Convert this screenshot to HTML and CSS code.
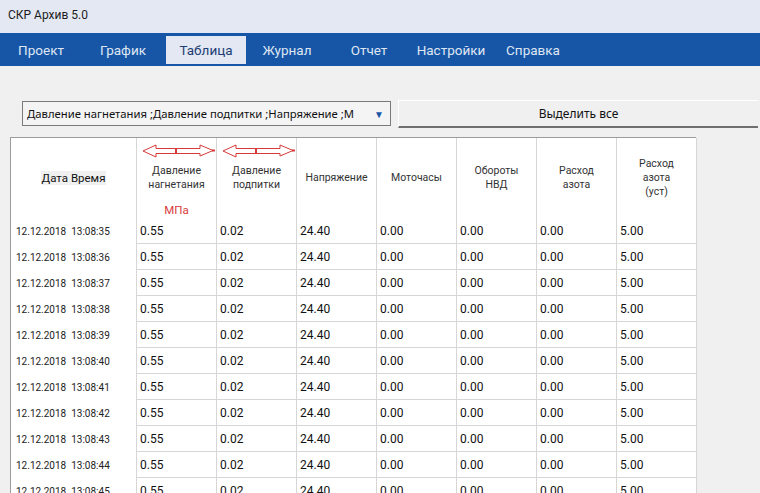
FILE: index.html
```html
<!DOCTYPE html>
<html lang="ru">
<head>
<meta charset="utf-8">
<link rel="stylesheet" href="styles.css">
</head>
<body>
<div class="titlebar">СКР Архив 5.0</div>
<nav class="nav">
  <div class="nav-item">Проект</div>
  <div class="nav-item">График</div>
  <div class="nav-item active">Таблица</div>
  <div class="nav-item">Журнал</div>
  <div class="nav-item">Отчет</div>
  <div class="nav-item">Настройки</div>
  <div class="nav-item">Справка</div>
</nav>
<div class="toolbar">
  <div class="combo"><span class="combo-text">Давление нагнетания ;Давление подпитки ;Напряжение ;М</span><span class="combo-arrow">▼</span></div>
  <div class="btn">Выделить все</div>
</div>
<div class="table">
  <div class="hcell date-h"><span class="date-label">Дата Время</span></div>
  <div class="hcell"><svg class="arrow" width="74" height="14" viewBox="0 0 74 14"><path d="M1 7 L14 1 L14 4.5 L58 4.5 L58 1 L71 6.5 L58 12 L58 9.5 L14 9.5 L14 13 Z" fill="none" stroke="#d63a3a" stroke-width="1"/><line x1="34" y1="4.5" x2="34" y2="9.5" stroke="#d63a3a" stroke-width="2"/><rect x="70" y="5.5" width="3" height="2" fill="#d63a3a"/></svg><span>Давление<br>нагнетания</span><span class="unit">МПа</span></div>
  <div class="hcell"><svg class="arrow" width="74" height="14" viewBox="0 0 74 14"><path d="M1 7 L14 1 L14 4.5 L58 4.5 L58 1 L71 6.5 L58 12 L58 9.5 L14 9.5 L14 13 Z" fill="none" stroke="#d63a3a" stroke-width="1"/><line x1="34" y1="4.5" x2="34" y2="9.5" stroke="#d63a3a" stroke-width="2"/><rect x="70" y="5.5" width="3" height="2" fill="#d63a3a"/></svg><span>Давление<br>подпитки</span></div>
  <div class="hcell"><span>Напряжение</span></div>
  <div class="hcell"><span>Моточасы</span></div>
  <div class="hcell"><span>Обороты<br>НВД</span></div>
  <div class="hcell"><span>Расход<br>азота</span></div>
  <div class="hcell"><span>Расход<br>азота<br>(уст)</span></div>

  <div class="dcell date">12.12.2018&nbsp;&nbsp;13:08:35</div><div class="dcell">0.55</div><div class="dcell">0.02</div><div class="dcell">24.40</div><div class="dcell">0.00</div><div class="dcell">0.00</div><div class="dcell">0.00</div><div class="dcell">5.00</div>
  <div class="dcell date">12.12.2018&nbsp;&nbsp;13:08:36</div><div class="dcell">0.55</div><div class="dcell">0.02</div><div class="dcell">24.40</div><div class="dcell">0.00</div><div class="dcell">0.00</div><div class="dcell">0.00</div><div class="dcell">5.00</div>
  <div class="dcell date">12.12.2018&nbsp;&nbsp;13:08:37</div><div class="dcell">0.55</div><div class="dcell">0.02</div><div class="dcell">24.40</div><div class="dcell">0.00</div><div class="dcell">0.00</div><div class="dcell">0.00</div><div class="dcell">5.00</div>
  <div class="dcell date">12.12.2018&nbsp;&nbsp;13:08:38</div><div class="dcell">0.55</div><div class="dcell">0.02</div><div class="dcell">24.40</div><div class="dcell">0.00</div><div class="dcell">0.00</div><div class="dcell">0.00</div><div class="dcell">5.00</div>
  <div class="dcell date">12.12.2018&nbsp;&nbsp;13:08:39</div><div class="dcell">0.55</div><div class="dcell">0.02</div><div class="dcell">24.40</div><div class="dcell">0.00</div><div class="dcell">0.00</div><div class="dcell">0.00</div><div class="dcell">5.00</div>
  <div class="dcell date">12.12.2018&nbsp;&nbsp;13:08:40</div><div class="dcell">0.55</div><div class="dcell">0.02</div><div class="dcell">24.40</div><div class="dcell">0.00</div><div class="dcell">0.00</div><div class="dcell">0.00</div><div class="dcell">5.00</div>
  <div class="dcell date">12.12.2018&nbsp;&nbsp;13:08:41</div><div class="dcell">0.55</div><div class="dcell">0.02</div><div class="dcell">24.40</div><div class="dcell">0.00</div><div class="dcell">0.00</div><div class="dcell">0.00</div><div class="dcell">5.00</div>
  <div class="dcell date">12.12.2018&nbsp;&nbsp;13:08:42</div><div class="dcell">0.55</div><div class="dcell">0.02</div><div class="dcell">24.40</div><div class="dcell">0.00</div><div class="dcell">0.00</div><div class="dcell">0.00</div><div class="dcell">5.00</div>
  <div class="dcell date">12.12.2018&nbsp;&nbsp;13:08:43</div><div class="dcell">0.55</div><div class="dcell">0.02</div><div class="dcell">24.40</div><div class="dcell">0.00</div><div class="dcell">0.00</div><div class="dcell">0.00</div><div class="dcell">5.00</div>
  <div class="dcell date">12.12.2018&nbsp;&nbsp;13:08:44</div><div class="dcell">0.55</div><div class="dcell">0.02</div><div class="dcell">24.40</div><div class="dcell">0.00</div><div class="dcell">0.00</div><div class="dcell">0.00</div><div class="dcell">5.00</div>
  <div class="dcell date">12.12.2018&nbsp;&nbsp;13:08:45</div><div class="dcell">0.55</div><div class="dcell">0.02</div><div class="dcell">24.40</div><div class="dcell">0.00</div><div class="dcell">0.00</div><div class="dcell">0.00</div><div class="dcell">5.00</div>
</div>
</body>
</html>
```
FILE: styles.css
```css
* { box-sizing: border-box; }
html, body { margin: 0; padding: 0; }
body {
  width: 760px;
  height: 493px;
  overflow: hidden;
  background: #f0f0f0;
  font-family: Roboto, "Liberation Sans", sans-serif;
  color: #222;
}
.titlebar {
  height: 33px;
  background: #e3e8f3;
  font-size: 12px;
  padding: 8px 0 0 8px;
  color: #1c1c1c;
}
.nav {
  height: 33px;
  background: #1756a7;
  display: flex;
}
.nav-item {
  width: 82px;
  margin-top: 3px;
  margin-bottom: 2px;
  display: flex;
  align-items: center;
  justify-content: center;
  font-size: 13.5px;
  color: #dfe6f2;
}
.nav-item.active {
  background: #e3e8f3;
  color: #1d3f73;
  margin-left: 2px;
  width: 80px;
}
.toolbar {
  display: flex;
  align-items: center;
  padding: 24px 0 0 22px;
  height: 71px;
}
.combo {
  width: 369px;
  height: 25px;
  border: 1px solid #7a7a7a;
  background: #f4f4f4;
  display: flex;
  align-items: center;
  justify-content: space-between;
  padding: 0 6px 0 4px;
  font-family: "Noto Sans", "Open Sans", sans-serif;
  font-size: 11.3px;
  color: #111;
  white-space: nowrap;
}
.combo-text { overflow: hidden; }
.combo-arrow { color: #1a56a6; font-size: 10px; }
.btn {
  margin-left: 7px;
  width: 360px;
  height: 28px;
  border-top: 1px solid #fff;
  border-left: 1px solid #fff;
  border-bottom: 2px solid #6f6f6f;
  background: #f0f0f0;
  display: flex;
  align-items: center;
  justify-content: center;
  font-family: "Noto Sans", "Open Sans", sans-serif;
  font-size: 12px;
  color: #111;
}
.table {
  margin-left: 10px;
  width: 686px;
  display: grid;
  grid-template-columns: 126px repeat(7, 80px);
  border-top: 1px solid #9c9c9c;
  border-left: 1px solid #9c9c9c;
  background: #fff;
}
.hcell {
  position: relative;
  height: 80px;
  border-right: 1px solid #d6d6d6;
  display: flex;
  align-items: center;
  justify-content: center;
  text-align: center;
  font-size: 10.5px;
  line-height: 14px;
  color: #333;
}
.date-h { font-size: 11.5px; color: #111; }
.date-label { background: #f0f0f0; padding: 0 1px; }
.arrow { position: absolute; top: 6px; left: 5px; }
.unit { position: absolute; bottom: 1px; left: 0; right: 0; color: #d63a3a; font-size: 11.5px; }
.dcell {
  height: 26px;
  border-right: 1px solid #d6d6d6;
  border-bottom: 1px solid #d6d6d6;
  display: flex;
  align-items: center;
  padding: 1px 0 0 3px;
  font-size: 12px;
  color: #111;
}
.dcell.date {
  border-bottom: none;
  padding-left: 5px;
  font-size: 10px;
  color: #222;
}
```
